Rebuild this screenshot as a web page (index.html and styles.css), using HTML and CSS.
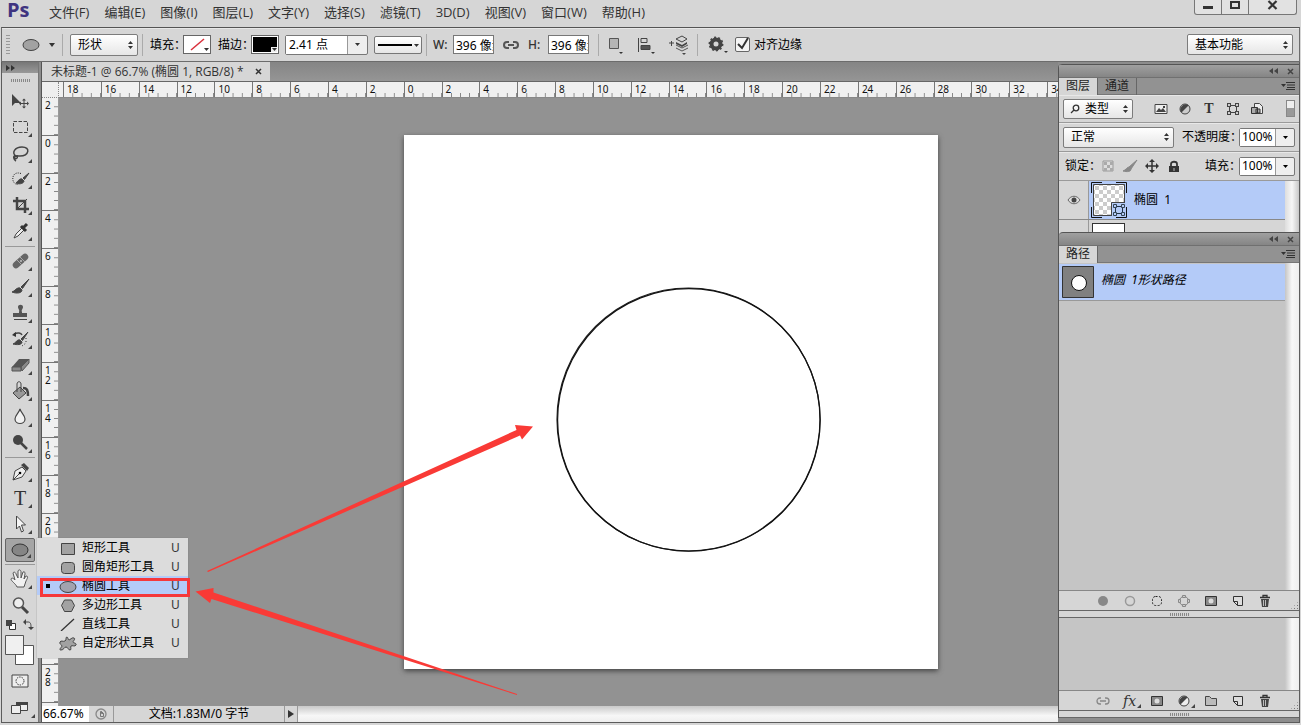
FILE: index.html
```html
<!DOCTYPE html>
<html lang="zh-CN">
<head>
<meta charset="utf-8">
<title>未标题-1 @ 66.7% (椭圆 1, RGB/8)</title>
<link rel="stylesheet" href="styles.css">
</head>
<body>
<div class="app">
  <header class="menubar">
    <span class="logo">Ps</span>
    <nav class="menus">
      <button>文件(F)</button><button>编辑(E)</button><button>图像(I)</button><button>图层(L)</button><button>文字(Y)</button><button>选择(S)</button><button>滤镜(T)</button><button>3D(D)</button><button>视图(V)</button><button>窗口(W)</button><button>帮助(H)</button>
    </nav>
    <div class="window-buttons">
      <button aria-label="最小化"><svg width="12" height="12"><path d="M1 6h10v3H1z" fill="#333"/></svg></button>
      <button aria-label="最大化"><svg width="12" height="12"><path d="M2 2h8v6H2z" fill="none" stroke="#333" stroke-width="2"/></svg></button>
      <button class="wide" aria-label="关闭"><svg width="12" height="12"><path d="M1.500 1l8 8m0-8l-8 8" stroke="#333" stroke-width="2.200"/></svg></button>
    </div>
  </header>

  <div class="options">
    <span class="grip-v"></span>
    <button class="tool-preset" aria-label="椭圆工具"><svg width="34" height="16"><ellipse cx="9" cy="8" rx="8" ry="5.500" fill="#a2a2a2" stroke="#444"/><path d="M27 6h6l-3 4z" fill="#333"/></svg></button>
    <span class="rule"></span>
    <span class="select mode"><select aria-label="工具模式"><option>形状</option></select><svg class="updown" width="5" height="8"><path d="M0 3l2.500-3L5 3zM0 5l2.500 3L5 5z"/></svg></span>
    <span class="rule"></span>
    <span class="caption">填充：</span>
    <button class="swatch" aria-label="填充"><svg width="26" height="17"><path d="M7 14L20 3" stroke="#d9303c" stroke-width="1.500"/><path d="M20 12h5l-2.500 3z" fill="#333"/></svg></button>
    <span class="caption second">描边：</span>
    <button class="swatch" aria-label="描边"><svg width="26" height="17"><path d="M1 1h24v15H1z"/><path d="M19 11h6v5h-6z" fill="#eee"/><path d="M20 12h5l-2.500 3z" fill="#333"/></svg></button>
    <span class="combo stroke-size"><input aria-label="描边宽度" value="2.41 点"><button aria-label="选择宽度"><svg width="5" height="3"><path d="M0 0h5L2.500 3z" fill="#333"/></svg></button></span>
    <button class="stroke-type" aria-label="描边类型"><svg width="46" height="16"><path d="M3 8h34" stroke="#000" stroke-width="2"/><path d="M39 7h5l-2.500 3z" fill="#333"/></svg></button>
    <span class="rule"></span>
    <label class="caption unit" for="w">W:</label><input class="size" id="w" value="396 像素">
    <button class="link" aria-label="链接"><svg width="16" height="10"><path d="M6 2H4a3 3 0 0 0 0 6h2M10 2h2a3 3 0 0 1 0 6h-2M5 5h6" fill="none" stroke="#555" stroke-width="2"/></svg></button>
    <label class="caption unit" for="h">H:</label><input class="size" id="h" value="396 像素">
    <span class="rule"></span>
    <div class="ops">
      <button aria-label="路径操作"><svg width="18" height="20"><path d="M3.500 3.500h9v10h-9z" fill="#b5b5b5" stroke="#555"/><path d="M13 17h4l-2 2z"/></svg></button>
      <button aria-label="对齐"><svg width="18" height="20"><path d="M1.500 3v14M4 3.500h6v4H4z" fill="none" stroke="#444"/><path d="M4 10.500h9v4H4z" fill="#555" stroke="#444"/><path d="M14 17h4l-2 2z"/></svg></button>
      <button aria-label="排列"><svg width="20" height="20"><path d="M8 10l6 3 6-3M8 13l6 3 6-3" fill="none" stroke="#555"/><path d="M8 4l6-3 5 3-5 3zM1 8h5M3.500 6v5" fill="none" stroke="#444"/><path d="M8 7l6 3 5-3v2l-5 3-6-3zM14 18h4l-2 2z" fill="#444"/></svg></button>
    </div>
    <span class="rule"></span>
    <button class="gear" aria-label="设置"><svg width="20" height="18"><circle cx="8" cy="8" r="4.500" fill="none" stroke="#444" stroke-width="4"/><circle cx="8" cy="8" r="6.700" fill="none" stroke="#444" stroke-width="1.500" stroke-dasharray="2 2.200"/><path d="M16 15h4l-2 2z"/></svg></button>
    <label class="check"><input type="checkbox" checked><svg width="15" height="15"><path d="M3 7l4 4 6-10" fill="none" stroke="#333" stroke-width="2"/></svg>对齐边缘</label>
    <span class="select workspace-select"><select aria-label="工作区"><option>基本功能</option></select><svg class="updown" width="5" height="8"><path d="M0 3l2.500-3L5 3zM0 5l2.500 3L5 5z"/></svg></span>
  </div>

  <main class="workspace">
    <aside class="tools">
      <div class="tools-head"><svg width="9" height="6"><path d="M0 0l4 3-4 3zM5 0l4 3-4 3z"/></svg></div>
      <div class="tools-grip"><span class="grip-h"></span></div>
      <div class="tool-list">
        <button aria-label="移动"><svg width="24" height="24"><path d="M4 5v12l3-3h6z" fill="#444"/><path d="M12 14.500h8M16 10.500v8" stroke="#444"/><path d="M11 14.500l2-2v4zM21 14.500l-2-2v4zM16 9.500l-2 2h4zM16 19.500l-2-2h4z" fill="#444"/></svg></button>
        <button class="more" aria-label="选框"><svg width="24" height="24"><path d="M5.500 6.500h14v11h-14z" fill="none" stroke="#444" stroke-dasharray="3.500 1.500"/></svg></button>
        <button class="more" aria-label="套索"><svg width="24" height="24"><path d="M8 15C3 12 7 6 14 6c9 0 7 9-2 9-2 0-6-1-5 2 1 2 4-1 1-2-4-1-2 4 0 5" fill="none" stroke="#444" stroke-width="1.500"/></svg></button>
        <button class="more" aria-label="快速选择"><svg width="24" height="24"><path d="M13 6.500c-6-2-9 2-8 7 1 3 3 4 5 4" fill="none" stroke="#222" stroke-dasharray="1 1.200"/><path d="M21 6l-6 5 1.500 1.500zM14 12c-2-1-4 2-6 4 4 2 8 0 8-2z" fill="#444" stroke="#444"/></svg></button>
        <button class="more" aria-label="裁剪"><svg width="24" height="24"><path d="M9 4v12h12M5 8h12v12" fill="none" stroke="#444" stroke-width="2.500"/><path d="M9 16L19 6" stroke="#444"/></svg></button>
        <button class="more" aria-label="吸管"><svg width="24" height="24"><path d="M6 19l2-4 6-6 2 2-6 6z" fill="#eee" stroke="#444"/><path d="M13 7l5 5M15 9l4-4" stroke="#333" stroke-width="3"/></svg></button>
        <hr class="after-sampling">
        <button class="more" aria-label="修复"><svg width="24" height="24"><path d="M8 16l9-8" stroke="#666" stroke-width="6.500" stroke-linecap="round"/><path d="M9 11l5 5M12 8l5 5" stroke="#aaa"/><path d="M12 12h2" stroke="#eee"/></svg></button>
        <button class="more" aria-label="画笔"><svg width="24" height="24"><path d="M21 4l-8 8 1.500 1.500zM12 13c-3-1-5 3-8 4 5 2 10 1 10-2z" fill="#444" stroke="#444"/></svg></button>
        <button class="more" aria-label="图章"><svg width="24" height="24"><path d="M11 11c1-2-1-3-1-5 0-3 5-3 5 0 0 2-2 3-1 5v1h5v4H5v-4h6z" fill="#555"/><path d="M6 18.500h13" stroke="#444"/></svg></button>
        <button class="more" aria-label="历史记录画笔"><svg width="24" height="24"><path d="M20 5l-7 7 1.500 1.500zM12 13c-3-1-4 3-7 4 4 1 9 1 9-2z" fill="#444" stroke="#444"/><path d="M6 7c4-2 7-1 8 1" fill="none" stroke="#444" stroke-width="1.500"/><path d="M4 8l4-3v5z" fill="#333"/><path d="M18 11v5l-4 3" stroke="#333" fill="none" stroke-dasharray="1 2"/></svg></button>
        <button class="more" aria-label="橡皮擦"><svg width="24" height="24"><path d="M11 6h10l-7 8H4z" fill="#555"/><path d="M4 14h9v4H4zM13 14l8-8v4l-7 8z" fill="#888" stroke="#555"/></svg></button>
        <button class="more" aria-label="油漆桶"><svg width="24" height="24"><path d="M5 14l7-6 6 6-7 6z" fill="#999" stroke="#444"/><path d="M9 13V5c0-3 4-3 4 0v8" fill="none" stroke="#444"/><path d="M15 9c4 0 5 2 5 8" fill="none" stroke="#444" stroke-width="2.500"/></svg></button>
        <button class="more" aria-label="模糊"><svg width="24" height="24"><path d="M12 4c1 4 5 6 5 10 0 6-10 6-10 0 0-4 4-6 5-10z" fill="#f1f1f1" stroke="#444" stroke-width="1.200"/></svg></button>
        <button class="more" aria-label="减淡"><svg width="24" height="24"><circle cx="10" cy="9" r="5" fill="#444"/><path d="M13 12l6 6" stroke="#444" stroke-width="2.500"/></svg></button>
        <hr>
        <button class="more" aria-label="钢笔"><svg width="24" height="24"><path d="M5 20l2-9 7-4 4 4-4 6zM5 20l6-6" fill="#eee" stroke="#444"/><path d="M13 5l3-2 5 5-2 3z" fill="#444"/><circle cx="12" cy="13" r="1.300"/></svg></button>
        <button class="more type" aria-label="文字">T</button>
        <button class="more" aria-label="路径选择"><svg width="24" height="24"><path d="M8.500 4v13l3-3 2 6 2-1-2-6h4z" fill="#f5f5f5" stroke="#444"/></svg></button>
        <button class="more active" aria-label="椭圆"><svg width="24" height="24"><ellipse cx="12" cy="12" rx="8" ry="6" fill="#858585" stroke="#333"/></svg></button>
        <hr>
        <button class="more" aria-label="抓手"><svg width="24" height="24"><path d="M9 20c-1-3-6-6-6-8 1-2 3 0 4 1L5 6c1-2 3 0 3 1l2 4V4c1-2 3-1 3 1v6l2-6c2-1 2 1 2 2l-1 5 2-3c3 0 1 3 0 5l-2 6z" fill="#f1f1f1" stroke="#555"/></svg></button>
        <button aria-label="缩放"><svg width="24" height="24"><circle cx="10.500" cy="10" r="5" fill="#eee" stroke="#555" stroke-width="1.500"/><path d="M14 14l6 6" stroke="#444" stroke-width="3"/></svg></button>
      </div>
      <div class="mini"><button aria-label="默认颜色"><svg width="12" height="12"><path d="M4.500 4.500h6v6h-6z" fill="#fff" stroke="#333"/><path d="M1 1h6v6H1z" fill="#444"/></svg></button><button aria-label="切换颜色"><svg width="12" height="12"><path d="M3 3h3c2 0 3 1 3 5" fill="none" stroke="#444"/><path d="M1 3l3-3v6zM9 11L6 8h6z" fill="#444"/></svg></button></div>
      <svg class="colors" width="32" height="32"><path d="M11.500 10.500h18v19h-18z" fill="#fff" stroke="#555"/><path d="M1.500 .500h18v19h-18z" fill="#f0f0f0" stroke="#555"/></svg>
      <button class="foot-tool" aria-label="快速蒙版"><svg width="18" height="14"><path d="M1 1h16v12H1z" fill="#eee" stroke="#444"/><circle cx="9" cy="7" r="4" fill="none" stroke="#333" stroke-dasharray="1.500 1"/></svg></button>
      <button class="foot-tool more" aria-label="屏幕模式"><svg width="20" height="14"><path d="M6.500 1.500h11v8h-11z" fill="#eee" stroke="#444"/><path d="M6 1h12v3H6z" fill="#444"/><path d="M1.500 4.500h9v8h-9z" fill="#eee" stroke="#444"/></svg></button>

      <div class="flyout">
        <button><svg width="18" height="14"><path d="M2.500 2.500h13v11h-13z" fill="#a2a2a2" stroke="#444"/></svg><span>矩形工具</span><kbd>U</kbd></button>
        <button><svg width="18" height="14"><rect x="2.500" y="2.500" width="13" height="11" rx="3" fill="#a2a2a2" stroke="#444"/></svg><span>圆角矩形工具</span><kbd>U</kbd></button>
        <button class="current"><svg width="18" height="14"><ellipse cx="9" cy="8" rx="8" ry="5.500" fill="#a2a2ae" stroke="#444"/></svg><span>椭圆工具</span><kbd>U</kbd></button>
        <button><svg width="18" height="14"><path d="M5.500 2h7l3 5.500-3 6h-7l-3-6z" fill="#a2a2a2" stroke="#444"/></svg><span>多边形工具</span><kbd>U</kbd></button>
        <button><svg width="18" height="14"><path d="M2 14L15 2" stroke="#333" stroke-width="1.300"/></svg><span>直线工具</span><kbd>U</kbd></button>
        <button><svg width="18" height="16"><path d="M8 2c1 0 1 3 2 3s3-3 5-2-1 3-1 4 4 1 3 3-4 0-5 1 1 4-1 4-2-3-4-3-2 3-5 3 1-3 1-4-3-2-2-4 3 0 5-1 0-4 2-4z" fill="#a2a2a2" stroke="#444"/></svg><span>自定形状工具</span><kbd>U</kbd></button>
      </div>
    </aside>

    <section class="document">
      <div class="tabs"><div class="tab">未标题-1 @ 66.7% (椭圆 1, RGB/8) *<button aria-label="关闭文档"><svg width="7" height="7"><path d="M1 1l5 5m0-5L1 6" stroke="#333" stroke-width="1.500"/></svg></button></div></div>
      <div class="stage">
        <div class="corner"></div>
        <div class="ruler-x"><div class="scale"><i>18</i><i>16</i><i>14</i><i>12</i><i>10</i><i>8</i><i>6</i><i>4</i><i>2</i><i>0</i><i>2</i><i>4</i><i>6</i><i>8</i><i>10</i><i>12</i><i>14</i><i>16</i><i>18</i><i>20</i><i>22</i><i>24</i><i>26</i><i>28</i><i>30</i><i>32</i><i>34</i></div></div>
        <div class="ruler-y"><div class="scale"><i>2</i><i>0</i><i>2</i><i>4</i><i>6</i><i>8</i><i>1<br>0</i><i>1<br>2</i><i>1<br>4</i><i>1<br>6</i><i>1<br>8</i><i>2<br>0</i><i>2<br>2</i><i>2<br>4</i><i>2<br>6</i><i>2<br>8</i><i>3<br>0</i></div></div>
        <div class="canvas"><svg class="page" width="534" height="534"><circle cx="284.500" cy="284.500" r="131.500" fill="none" stroke="#222" stroke-width="1.200"/><circle cx="284.900" cy="284.900" r="131.300" fill="none" stroke="#111" stroke-width="1.200"/></svg></div>
      </div>
      <footer class="status">
        <input aria-label="缩放比例" value="66.67%">
        <span class="preview"><svg width="12" height="12"><circle cx="6" cy="6" r="5" fill="none" stroke="#888" stroke-width="1.300"/><path d="M5.500 3.500v5h3V5.500l-2-2zM6.500 3.500v2h2" fill="none" stroke="#777"/></svg></span>
        <span class="doc-info">文档:1.83M/0 字节</span>
        <button aria-label="状态选项"><svg width="6" height="8"><path d="M0 0l6 4-6 4z" fill="#333"/></svg></button>
        <span class="scrollbar"></span>
      </footer>
    </section>

    <aside class="panels">
      <div class="panel-head"><svg width="9" height="6"><path d="M4 0L0 3l4 3zM9 0L5 3l4 3z"/></svg><svg width="7" height="7"><path d="M1 1l5 5m0-5L1 6" stroke="#444" stroke-width="1.500"/></svg></div>
      <div class="panel-tabs"><button class="on">图层</button><button>通道</button><svg class="menu-icon" width="14" height="8"><path d="M0 2h5L2.500 5zM5 0h9v1H5zM6 2.500h8v1H6zM6 5h8v1H6zM5 7h9v1H5z"/></svg></div>
      <div class="row filter">
        <span class="select kind"><svg class="search" width="10" height="10"><circle cx="6" cy="4" r="2.800" fill="none" stroke="#333" stroke-width="1.300"/><path d="M4 6L1 9" stroke="#333" stroke-width="1.300"/></svg><select aria-label="筛选类型"><option>类型</option></select><svg class="updown" width="5" height="8"><path d="M0 3l2.500-3L5 3zM0 5l2.500 3L5 5z"/></svg></span>
        <div class="filter-icons">
          <button aria-label="像素图层"><svg width="14" height="12"><path d="M1 1.500h12v9H1z" fill="#eee" stroke="#444"/><path d="M2 9l3-4 2 2 2-2 3 4z" fill="#444"/><circle cx="10" cy="4" r="1"/></svg></button>
          <button aria-label="调整图层"><svg width="14" height="12"><circle cx="7" cy="6" r="5" fill="#ccc" stroke="#444"/><path d="M3.500 9.500A5 5 0 0 1 10.500 2.500z" fill="#444"/></svg></button>
          <button class="type-filter" aria-label="文字图层">T</button>
          <button aria-label="形状图层"><svg width="14" height="12"><path d="M3.500 2.500h7v7h-7z" fill="none" stroke="#444"/><path d="M1 0h4v4H1zM9 0h4v4H9zM1 8h4v4H1zM9 8h4v4H9z" fill="#444"/><path d="M2 1h2v2H2zM10 1h2v2h-2zM2 9h2v2H2zM10 9h2v2h-2z" fill="#ccc"/></svg></button>
          <button aria-label="智能对象"><svg width="14" height="14"><path d="M4.500 1.500h5l3 3v7h-8z" fill="#eee" stroke="#444"/><path d="M1.500 5.500h6v6h-6zM6 7h4v4H6z" fill="#aaa" stroke="#333"/></svg></button>
        </div>
        <button class="toggle" aria-label="打开或关闭筛选"></button>
      </div>
      <div class="row">
        <span class="select blend"><select aria-label="混合模式"><option>正常</option></select><svg class="updown" width="5" height="8"><path d="M0 3l2.500-3L5 3zM0 5l2.500 3L5 5z"/></svg></span>
        <label class="push" for="op">不透明度：</label><span class="combo pct"><input id="op" value="100%"><button aria-label="不透明度滑块"><svg width="5" height="3"><path d="M0 0h5L2.500 3z"/></svg></button></span>
      </div>
      <div class="row lock">
        <span>锁定：</span>
        <button aria-label="锁定透明像素"><svg width="12" height="12"><path d="M1 1h10v10H1z" fill="#ddd" stroke="#999"/><path d="M2 2h3v3H2zM8 2h3v3H8zM5 5h3v3H5zM2 8h3v3H2zM8 8h3v3H8z" fill="#aaa"/></svg></button>
        <button aria-label="锁定图像像素"><svg width="16" height="14"><path d="M15 1L7 8l2 2zM7 8c-2 0-3 3-6 4 4 1 8 1 8-2z" fill="#888" stroke="#888"/></svg></button>
        <button aria-label="锁定位置"><svg width="14" height="14"><path d="M1 7h12M7 1v12" stroke="#333" stroke-width="1.500"/><path d="M0 7l3-3v6zM14 7l-3-3v6zM7 0L4 3h6zM7 14l-3-3h6z" fill="#333"/></svg></button>
        <button aria-label="全部锁定"><svg width="12" height="13"><path d="M1 6h10v6H1z" fill="#333"/><path d="M3 6V4c0-3 6-3 6 0v2" fill="none" stroke="#333" stroke-width="1.800"/><path d="M6 8v3" stroke="#bbb"/></svg></button>
        <label class="push" for="fill">填充：</label><span class="combo pct"><input id="fill" value="100%"><button aria-label="填充滑块"><svg width="5" height="3"><path d="M0 0h5L2.500 3z"/></svg></button></span>
      </div>
      <div class="layers">
        <div class="layer"><button class="eye" aria-label="可见性"><svg width="14" height="10"><path d="M1 5c3-5 9-5 12 0-3 5-9 5-12 0z" fill="#ddd" stroke="#666"/><circle cx="7" cy="5" r="2.500" fill="#444"/></svg></button><div class="layer-main"><svg width="36" height="36"><defs><pattern id="check" width="8" height="8" patternUnits="userSpaceOnUse"><path d="M0 0h8v8H0z" fill="#fff"/><path d="M0 0h4v4H0zM4 4h4v4H4z" fill="#ccc"/></pattern></defs><path d="M2.500 2.500h31v31h-31z" fill="url(#check)" stroke="#444"/><path d="M20 20h16v16H20z" fill="#b4cbf8"/><path d="M34 20.500H20.500V34" fill="none" stroke="#444"/><path d="M24.500 24.500h7v7h-7z" fill="none" stroke="#234"/><path d="M22.500 22.500h3v3h-3zM30.500 22.500h3v3h-3zM22.500 30.500h3v3h-3zM30.500 30.500h3v3h-3z" fill="#b4cbf8" stroke="#345"/><path d="M.500 11V.500H11M25 .500h10.500V11M.500 25v10.500H11M25 35.500h10.500V25" fill="none" stroke="#111"/></svg><span>椭圆&nbsp; 1</span></div></div>
        <div class="layer clipped"><div class="eye"></div><div class="layer-main plain"><span class="blank-thumb"></span></div></div>
      </div>
      <div class="panel-head second"><svg width="9" height="6"><path d="M4 0L0 3l4 3zM9 0L5 3l4 3z"/></svg><svg width="7" height="7"><path d="M1 1l5 5m0-5L1 6" stroke="#444" stroke-width="1.500"/></svg></div>
      <div class="panel-tabs"><button class="on">路径</button><svg class="menu-icon" width="14" height="8"><path d="M0 2h5L2.500 5zM5 0h9v1H5zM6 2.500h8v1H6zM6 5h8v1H6zM5 7h9v1H5z"/></svg></div>
      <div class="paths"><div class="path-row"><svg width="32" height="32"><path d="M.500 .500h31v31H.500z" fill="#808080" stroke="#333"/><circle cx="17" cy="17" r="7.500" fill="#fff" stroke="#111"/></svg><em>椭圆&nbsp; 1形状路径</em></div></div>
      <div class="panel-foot">
        <button aria-label="填充路径"><svg width="14" height="14"><circle cx="7" cy="7" r="5" fill="#888"/></svg></button>
        <button aria-label="描边路径"><svg width="14" height="14"><circle cx="7" cy="7" r="4.500" fill="none" stroke="#999" stroke-width="1.500"/></svg></button>
        <button aria-label="载入选区"><svg width="14" height="14"><rect x="2.500" y="2.500" width="9" height="9" rx="3" fill="none" stroke="#222" stroke-dasharray="2 1.500"/></svg></button>
        <button aria-label="生成工作路径"><svg width="14" height="14"><circle cx="7" cy="7" r="4.500" fill="none" stroke="#888"/><path d="M5.500 1.500h3v2h-3zM5.500 10.500h3v2h-3zM1.500 5.500h2v3h-2zM10.500 5.500h2v3h-2z" fill="#ccc" stroke="#888"/></svg></button>
        <button aria-label="蒙版"><svg width="14" height="14"><path d="M1.500 2.500h11v9h-11z" fill="#888" stroke="#333"/><circle cx="7" cy="7" r="2.500" fill="#ddd"/></svg></button>
        <button aria-label="新建路径"><svg width="14" height="14"><path d="M2.500 2.500h9v9h-5l-4-4zM2.500 7.500h4v4" fill="#ddd" stroke="#333"/></svg></button>
        <button aria-label="删除"><svg width="14" height="14"><path d="M3 5h8l-1 8H4z" fill="#444"/><path d="M2 3.500h10M5 3V1.500h4V3" fill="none" stroke="#333" stroke-width="1.300"/><path d="M5.500 6v6M7.500 6v6" stroke="#bbb"/></svg></button>
        <span class="resize"></span>
      </div>
      <div class="panel-grip"><span class="grip-h"></span></div>
      <div class="layers-rest"></div>
      <div class="panel-foot">
        <button aria-label="链接图层"><svg width="14" height="14"><path d="M5 4H4a3 3 0 0 0 0 6h1M9 4h1a3 3 0 0 1 0 6H9M4 7h6" fill="none" stroke="#888" stroke-width="1.300"/></svg></button>
        <button class="fx more" aria-label="图层样式">fx</button>
        <button aria-label="添加蒙版"><svg width="14" height="14"><path d="M1.500 2.500h11v9h-11z" fill="#888" stroke="#333"/><circle cx="7" cy="7" r="2.500" fill="#ddd"/></svg></button>
        <button class="more" aria-label="新建调整图层"><svg width="14" height="14"><circle cx="7" cy="7" r="5" fill="#eee" stroke="#444"/><path d="M3.500 10.500A5 5 0 0 1 10.500 3.500z" fill="#444"/></svg></button>
        <button aria-label="新建组"><svg width="14" height="14"><path d="M1.500 2.500h4l2 2h5v7h-11z" fill="#bbb" stroke="#444"/></svg></button>
        <button aria-label="新建图层"><svg width="14" height="14"><path d="M2.500 2.500h9v9h-5l-4-4zM2.500 7.500h4v4" fill="#ddd" stroke="#333"/></svg></button>
        <button aria-label="删除图层"><svg width="14" height="14"><path d="M3 5h8l-1 8H4z" fill="#444"/><path d="M2 3.500h10M5 3V1.500h4V3" fill="none" stroke="#333" stroke-width="1.300"/><path d="M5.500 6v6M7.500 6v6" stroke="#bbb"/></svg></button>
        <span class="resize"></span>
      </div>
      <div class="panel-grip"><span class="grip-h"></span></div>
    </aside>
  </main>
  <svg class="arrows" width="560" height="710"><path d="M207 571L516.500 430l-1.500-5 18 1.500-11 13-2-4L208 572zM195.500 591.500l18-3.500v4.500L517 694v1L211.500 599l-1.500 4z" fill="#f93a36"/></svg>
</div>
</body>
</html>
```

FILE: styles.css
```css
* { box-sizing: border-box; }
body { margin: 0; background: #d6d6d6; color: #000; font: 12px/16px "Noto Sans", "Noto Sans CJK SC", sans-serif; }
svg { display: block; flex: none; }
button, input, select { font: inherit; color: inherit; margin: 0; padding: 0; border: 0; background: none; border-radius: 0; min-width: 0; }
input, select { outline: 0; }
.app { position: relative; display: flex; flex-direction: column; height: 100vh; overflow: hidden; }

/* menu bar */
.menubar { display: flex; height: 27px; flex: none; }
.logo { width: 40px; padding-left: 7px; font: bold 20px/20px "Open Sans", sans-serif; color: #3f3480; }
.menus { display: flex; gap: 15px; padding-left: 9px; height: 23px; font: 13px/22px "Open Sans", "Noto Sans CJK SC", sans-serif; color: #333; }
.menus button { white-space: nowrap; }
.window-buttons { display: flex; margin-left: auto; margin-right: 4px; height: 15px; border: 1px solid #777; border-top: 0; border-radius: 0 0 3px 3px; background: #e2e2e2; }
.window-buttons button { width: 27px; display: flex; justify-content: center; border-right: 1px solid #777; }
.window-buttons .wide { width: 47px; border-right: 0; }

/* options bar */
.options { display: flex; align-items: center; height: 35px; flex: none; margin: 0 1px; padding-left: 4px; padding-right: 6px; border: 1px solid #6c6c6c; border-top-color: #555; box-shadow: inset 0 1px #e8e8e8; }
.options > * { flex: none; }
.grip-v { width: 4px; height: 20px; background: repeating-linear-gradient(#999 0 1px, transparent 1px 3px); }
.tool-preset { width: 34px; margin-left: 12px; margin-right: 2px; }
.rule { width: 1px; height: 22px; margin: 0 7px 0 4px; background: #aaa; }
.select { position: relative; display: flex; align-items: center; border: 1px solid #7c7c7c; border-radius: 2px; background: linear-gradient(#fff, #e6e6e6); }
.select select { appearance: none; width: 100%; height: 100%; padding: 0 7px; }
.select .updown { position: absolute; right: 4px; fill: #333; pointer-events: none; }
.mode { width: 68px; height: 22px; }
.caption { width: 33px; white-space: nowrap; overflow: hidden; }
.caption.second { margin-left: 7px; }
.swatch { border: 1px solid #666; background: #fff; }
.combo { display: flex; height: 20px; border: 1px solid #777; border-radius: 2px; background: #eee; }
.combo input { background: #fff; }
.combo button { display: flex; align-items: center; justify-content: center; border-left: 1px solid #999; }
.stroke-size { width: 83px; margin: 0 6px; }
.stroke-size input { width: 61px; padding-left: 3px; }
.stroke-size button { flex: 1; }
.stroke-type { border: 1px solid #777; border-radius: 2px; background: linear-gradient(#fff, #e6e6e6); }
.unit { width: 20px; font-weight: 500; color: #333; }
.size { width: 41px; height: 19px; padding-left: 2px; border: 1px solid #777; background: #fff; }
.link { margin: 0 9px; }
.stroke-type + .rule { margin-right: 6px; }
.size + .rule { margin-left: 9px; }
.ops { display: flex; gap: 13px; padding-right: 5px; }
.ops svg, .gear svg { fill: #333; }
.gear { margin-left: 3px; margin-right: 7px; }
.check { display: flex; align-items: center; gap: 4px; }
.check input { appearance: none; width: 15px; height: 15px; border: 1px solid #666; border-radius: 2px; background: #f5f5f5; }
.check svg { margin-left: -19px; pointer-events: none; }
.workspace-select { width: 106px; height: 21px; margin-left: auto; }

/* work area */
.workspace { display: flex; flex: 1; min-height: 0; margin: 0 1px 2px; border: 1px solid #5c5c5c; border-top: 0; background: #8d8d8d; }
.tools { position: relative; display: flex; flex-direction: column; width: 37px; flex: none; border-right: 1px solid #777; background: #d6d6d6; }
.tools-head { height: 11px; padding: 3px 4px; background: linear-gradient(#777, #999); fill: #333; }
.tools-grip { display: flex; height: 15px; align-items: center; justify-content: center; }
.grip-h { width: 19px; height: 3px; background: repeating-linear-gradient(90deg, #888 0 1px, transparent 1px 2px); }
.tool-list { display: flex; flex-direction: column; padding-right: 1px; }
.tool-list button, .foot-tool { position: relative; display: flex; align-items: center; justify-content: center; height: 26px; }
.tool-list button { width: 30px; margin: 0 3px; }
.tool-list hr { width: 30px; height: 1px; margin: 1px 3px; border: 0; background: #999; }
.tool-list .after-sampling { margin: 2px 3px 1px; }
.more::after { content: ""; position: absolute; right: 3px; bottom: 3px; border: 2px solid transparent; border-right-color: #444; border-bottom-color: #444; }
.tool-list .type { font: 20px/24px "Liberation Serif", serif; color: #333; }
.tool-list .active { height: 24px; margin: 1px 3px; border: 1px solid #666; border-radius: 2px; background: #a5a5a5; }
.mini { display: flex; justify-content: space-between; padding: 1px 4px 0 3px; }
.colors { margin: 4px 0 0 2px; }
.foot-tool { width: 36px; margin-top: 1px; }
.mini, .colors, .foot-tool { flex: none; }
.flyout { position: absolute; z-index: 2; left: 35px; top: 476px; width: 151px; height: 120px; background: #dcdcdc; box-shadow: 0 0 1px #777; }
.flyout button { display: grid; grid-template-columns: 18px 1fr 17px; align-items: center; width: 100%; height: 19px; padding-left: 22px; column-gap: 5px; text-align: left; line-height: 19px; }
.flyout kbd { font: 12px/19px "Noto Sans", sans-serif; color: #333; }
.flyout .current { position: relative; background: #b4cbf8; }
.flyout .current::before { content: ""; position: absolute; left: 9px; top: 8px; width: 4px; height: 4px; background: #000; }
.flyout .current::after { content: ""; position: absolute; inset: 2px -2px -2px 3px; border: 3px solid #f5383b; }

/* document window */
.document { display: flex; flex-direction: column; flex: 1; min-width: 0; margin-left: 2px; border-left: 1px solid #555; }
.tabs { display: flex; height: 20px; flex: none; border-bottom: 1px solid #666; background: linear-gradient(#858585, #959595); }
.tab { display: flex; align-items: center; gap: 11px; padding: 0 8px 0 9px; background: #d6d6d6; font: 12px/19px "Open Sans", "Noto Sans CJK SC", sans-serif; color: #333; white-space: nowrap; }
.stage { display: grid; grid-template: 16px minmax(0, 1fr) / 17px minmax(0, 1fr); flex: 1; min-height: 0; }
.corner { border-right: 1px dotted #888; border-bottom: 1px dotted #888; background: #eee; }
.ruler-x, .ruler-y { overflow: hidden; background: #f0f0f0; color: #111; font-size: 10px; line-height: 10px; }
.ruler-x { border-bottom: 1px solid #888; padding-left: 4px; }
.ruler-y { border-right: 1px solid #999; }
.ruler-x .scale { display: grid; grid-template-columns: repeat(27, 1fr); width: 1022px; height: 15px; }
.ruler-y .scale { display: grid; grid-template-rows: repeat(17, 1fr); width: 16px; height: 643px; }
.scale i { font-style: normal; }
.ruler-x i { padding: 2px 0 0 3px; border-left: 1px solid #777; background: linear-gradient(90deg, transparent 0 8px, #888 8px 9px) left bottom / 25% 4px repeat-x; }
.ruler-y i { padding: 2px 0 0 3px; border-bottom: 1px solid #777; background: linear-gradient(transparent 0 8px, #888 8px 9px) right top / 4px 25% repeat-y; }
.canvas { display: flex; align-items: center; justify-content: center; padding-left: 225px; padding-right: 1px; overflow: hidden; background: #929292; }
.canvas .page { background: #fff; box-shadow: 0 2px 5px #444; }
.status { display: flex; height: 16px; flex: none; background: #d6d6d6; line-height: 16px; }
.status input { width: 47px; padding-left: 1px; background: #fff; }
.preview { display: flex; align-items: center; justify-content: center; width: 25px; border-right: 1px solid #999; }
.doc-info { width: 170px; text-align: center; }
.status button { display: flex; align-items: center; justify-content: center; width: 14px; border: 1px solid #999; border-width: 0 1px; }
.scrollbar { flex: 1; background: linear-gradient(#c9c9c9, #f7f7f7 60%, #eee); }

/* panels */
.panels { display: flex; flex-direction: column; width: 241px; flex: none; margin: 2px 0 4px; border-left: 1px solid #555; border-radius: 4px 0 0 0; background: #d6d6d6; overflow: hidden; }
.panels > * { flex: none; }
.panel-head { display: flex; align-items: center; justify-content: flex-end; gap: 9px; height: 13px; padding-right: 5px; border-top: 1px solid #555; background: linear-gradient(#a0a0a0, #858585); fill: #444; }
.panel-tabs { display: flex; align-items: center; height: 18px; border-top: 1px solid #707070; border-bottom: 1px solid #777; background: #929292; }
.panel-tabs button { height: 17px; padding: 0 7px; border-right: 1px solid #666; color: #222; line-height: 16px; }
.panel-tabs .on { position: relative; background: #d6d6d6; }
.menu-icon { margin-left: auto; margin-right: 4px; fill: #333; }
.row { display: flex; align-items: center; height: 29px; padding: 0 4px; border-bottom: 1px solid #9a9a9a; box-shadow: inset 0 1px #e8e8e8; white-space: nowrap; }
.row > * { flex: none; }
.row.filter { height: 28px; }
.kind { width: 70px; height: 20px; }
.kind select { padding-left: 21px; }
.search { position: absolute; left: 6px; }
.filter-icons { display: flex; gap: 10px; margin-left: 21px; }
.filter-icons button { width: 14px; display: flex; align-items: center; justify-content: center; }
.filter-icons .type-filter { font: bold 14px/14px "Liberation Serif", serif; color: #333; }
.toggle { width: 9px; height: 17px; margin-left: auto; border: 1px solid #888; background: linear-gradient(#eee 0 50%, #999 50%); }
.blend { width: 111px; height: 21px; }
.push { margin-left: auto; width: 57px; overflow: hidden; }
.lock .push { width: 34px; }
.pct { width: 56px; height: 19px; }
.pct input { width: 35px; padding-left: 2px; }
.pct button { flex: 1; }
.lock > span:first-child { width: 32px; margin-left: 2px; overflow: hidden; }
.lock > button { width: 22px; display: flex; justify-content: center; }
.layers { height: 51px; padding-right: 14px; overflow: hidden; background: linear-gradient(90deg, #ddd, #f7f7f7, #c8c8c8) right / 14px 100% no-repeat #d6d6d6; }
.layer { display: flex; height: 39px; border-bottom: 1px solid #888; }
.eye { display: flex; align-items: center; justify-content: center; width: 30px; border-right: 1px solid #999; background: #d6d6d6; }
.layer-main { display: flex; flex: 1; align-items: center; gap: 7px; padding-left: 2px; background: #b4cbf8; }
.plain { align-items: flex-start; background: #d6d6d6; padding: 3px; }
.blank-thumb { width: 33px; height: 33px; border: 1px solid #333; background: #fff; }
.panel-head.second { border-radius: 4px 0 0 0; }
.panels > .paths { flex: 1; min-height: 0; padding: 1px 14px 0 0; background: linear-gradient(90deg, #c5c5c5, #f7f7f7, #eee) right / 14px 100% no-repeat #c5c5c5; }
.path-row { display: flex; align-items: center; gap: 7px; height: 37px; padding-left: 3px; border-bottom: 1px solid #999; background: #b4cbf8; }
.path-row em { padding-bottom: 4px; }
.panel-foot { display: flex; align-items: center; height: 20px; padding-left: 30px; border-top: 1px solid #888; background: #d6d6d6; }
.panel-foot button { position: relative; width: 27px; height: 19px; display: flex; align-items: center; justify-content: center; }
.panel-foot .more::after { right: 2px; bottom: 2px; }
.panel-foot .fx { font: italic 14px/18px "DejaVu Serif", serif; color: #333; }
.resize { width: 9px; height: 9px; margin-left: auto; align-self: flex-end; background: radial-gradient(#777 1px, transparent 1px) 0 0 / 3px 3px; clip-path: polygon(100% 0, 100% 100%, 0 100%); }
.panel-grip { display: flex; align-items: center; justify-content: center; height: 8px; border: 1px solid #666; border-width: 1px 0; }
.layers-rest { height: 72px; background: linear-gradient(90deg, #c5c5c5, #f7f7f7, #eee) right / 14px 100% no-repeat #c5c5c5; }

.arrows { position: absolute; z-index: 3; left: 0; top: 0; pointer-events: none; }
```
